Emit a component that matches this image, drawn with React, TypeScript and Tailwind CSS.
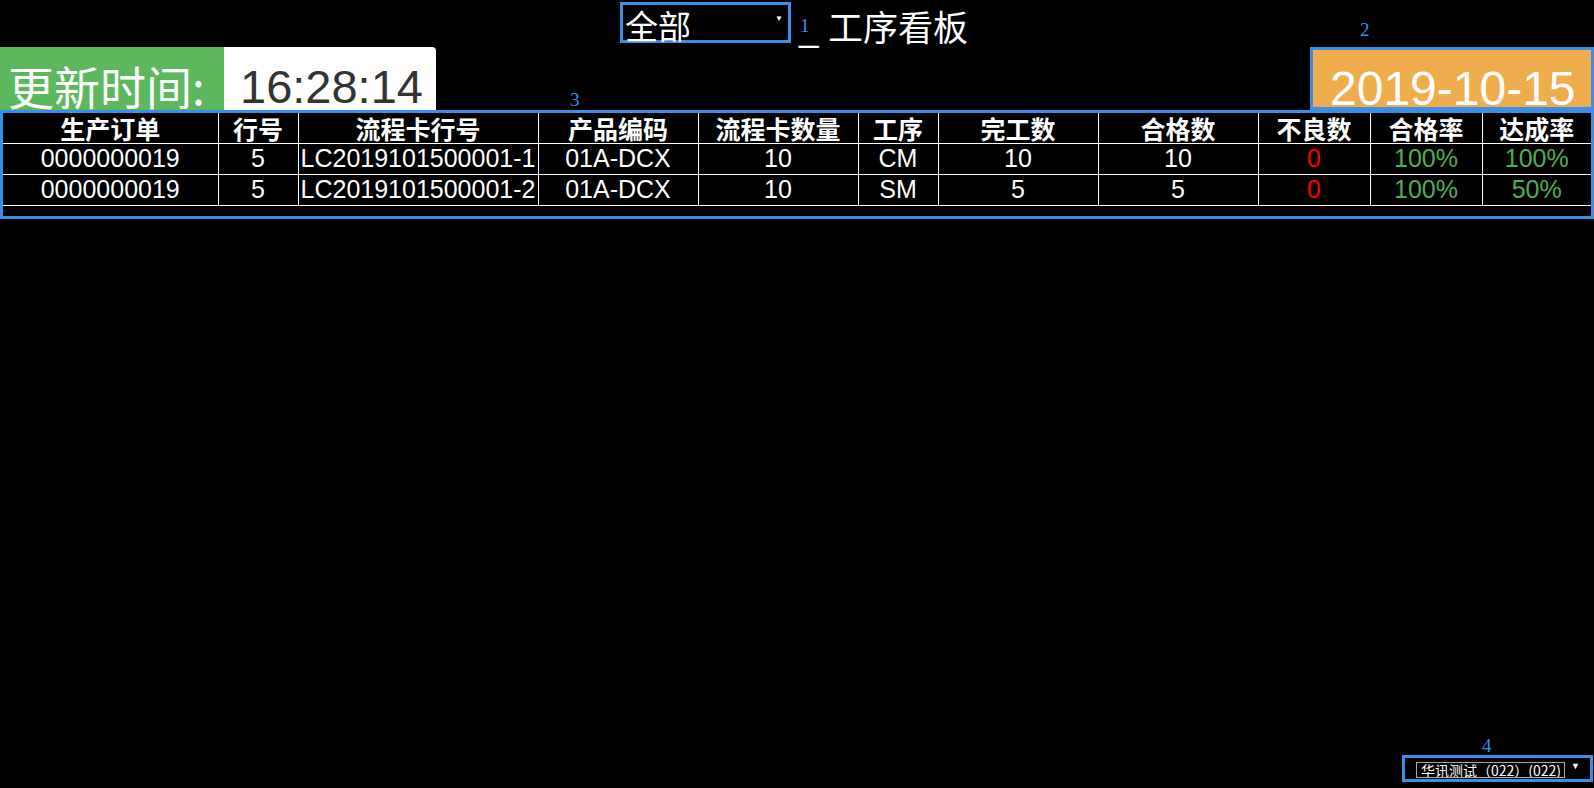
import React from 'react';

const blue = 'border-[#3a8ee6]';

const columns = [
  { title: '生产订单', width: 215 },
  { title: '行号', width: 80 },
  { title: '流程卡行号', width: 240 },
  { title: '产品编码', width: 160 },
  { title: '流程卡数量', width: 160 },
  { title: '工序', width: 80 },
  { title: '完工数', width: 160 },
  { title: '合格数', width: 160 },
  { title: '不良数', width: 112 },
  { title: '合格率', width: 112 },
  { title: '达成率', width: 109 },
];

const rows = [
  ['0000000019', '5', 'LC2019101500001-1', '01A-DCX', '10', 'CM', '10', '10', '0', '100%', '100%'],
  ['0000000019', '5', 'LC2019101500001-2', '01A-DCX', '10', 'SM', '5', '5', '0', '100%', '50%'],
];

function cellColor(index: number) {
  if (index === 8) return 'text-[#ff0000]';
  if (index === 9 || index === 10) return 'text-[#4caf50]';
  return 'text-white';
}

function App() {
  return (
    <div className="relative flex h-[788px] w-full flex-col overflow-hidden bg-black font-['Liberation_Sans','Noto_Sans_CJK_SC',sans-serif] text-white">
      {/* title row */}
      <div className="flex h-[47px] justify-center">
        <div className="flex items-start pr-[6px]">
          <div className={`relative mt-[2px] h-[41px] w-[171px] border-[3px] ${blue}`}>
            <span className="absolute left-[2px] top-[4px] font-['Noto_Sans_CJK_SC',sans-serif] text-[33px] leading-none">全部</span>
            <span className="absolute right-[5px] top-[10px] text-[8px] leading-none">▼</span>
          </div>
          <div className="ml-[8px] mt-[8px] whitespace-pre text-[35px] leading-[35px]">
            _ <span className="font-['Noto_Sans_CJK_SC',sans-serif]">工序看板</span>
          </div>
        </div>
      </div>

      {/* time + date row */}
      <div className="flex h-[63px] justify-between">
        <div className="flex">
          <div className="w-[224px] overflow-hidden bg-[#5cb85c] pl-[8px] pt-[15px] font-['Noto_Sans_CJK_SC',sans-serif] text-[46px] leading-none text-white">
            更新时间:
          </div>
          <div className="w-[212px] overflow-hidden rounded-tr-[4px] bg-white pl-[16px] pt-[16px] text-[47px] leading-none text-[#333333]">
            16:28:14
          </div>
        </div>
        <div className={`w-[284px] overflow-hidden border-[3px] ${blue} bg-[#f0ad4e] pl-[17px] pt-[15px] text-[48px] leading-none text-white`}>
          2019-10-15
        </div>
      </div>

      {/* table */}
      <div className={`border-[3px] ${blue} pb-[10px]`}>
        <table className="w-full table-fixed border-collapse">
          <colgroup>
            {columns.map((c) => (
              <col key={c.title} style={{ width: c.width }} />
            ))}
          </colgroup>
          <thead>
            <tr>
              {columns.map((c, i) => (
                <th
                  key={c.title}
                  className={`h-[30px] border-b border-white p-0 text-center align-middle font-['Noto_Sans_CJK_SC',sans-serif] text-[25px] font-bold leading-[28px] ${i > 0 ? 'border-l' : ''}`}
                >
                  {c.title}
                </th>
              ))}
            </tr>
          </thead>
          <tbody>
            {rows.map((r, ri) => (
              <tr key={ri}>
                {r.map((v, i) => (
                  <td
                    key={i}
                    className={`h-[31px] whitespace-nowrap border-b border-white p-0 text-center align-middle text-[25px] leading-[29px] ${cellColor(i)} ${i > 0 ? 'border-l' : ''}`}
                  >
                    {v}
                  </td>
                ))}
              </tr>
            ))}
          </tbody>
        </table>
      </div>

      <div className="flex-1" />

      {/* footer select */}
      <div className="mb-[6px] mr-[1px] flex justify-end">
        <div className={`flex h-[27px] w-[191px] items-start border-[3px] ${blue}`}>
          <div className="ml-[11px] mt-[4px] h-[16px] w-[149px] overflow-hidden whitespace-nowrap border border-[#a9a9a9] pl-[4px] font-['Noto_Sans_CJK_SC',sans-serif] text-[14px] leading-[14px] text-white">
            华讯测试（022）(022)
          </div>
          <span className="ml-[6px] mt-[4px] text-[9px] leading-none">▼</span>
        </div>
      </div>

      {/* region labels */}
      <span className="absolute left-[800px] top-[16px] font-['Liberation_Serif',serif] text-[19px] leading-none text-[#3a8ee6]">1</span>
      <span className="absolute left-[1360px] top-[20px] font-['Liberation_Serif',serif] text-[19px] leading-none text-[#3a8ee6]">2</span>
      <span className="absolute left-[570px] top-[90px] font-['Liberation_Serif',serif] text-[19px] leading-none text-[#3a8ee6]">3</span>
      <span className="absolute left-[1482px] top-[736px] font-['Liberation_Serif',serif] text-[19px] leading-none text-[#3a8ee6]">4</span>
    </div>
  );
}

export default App;
